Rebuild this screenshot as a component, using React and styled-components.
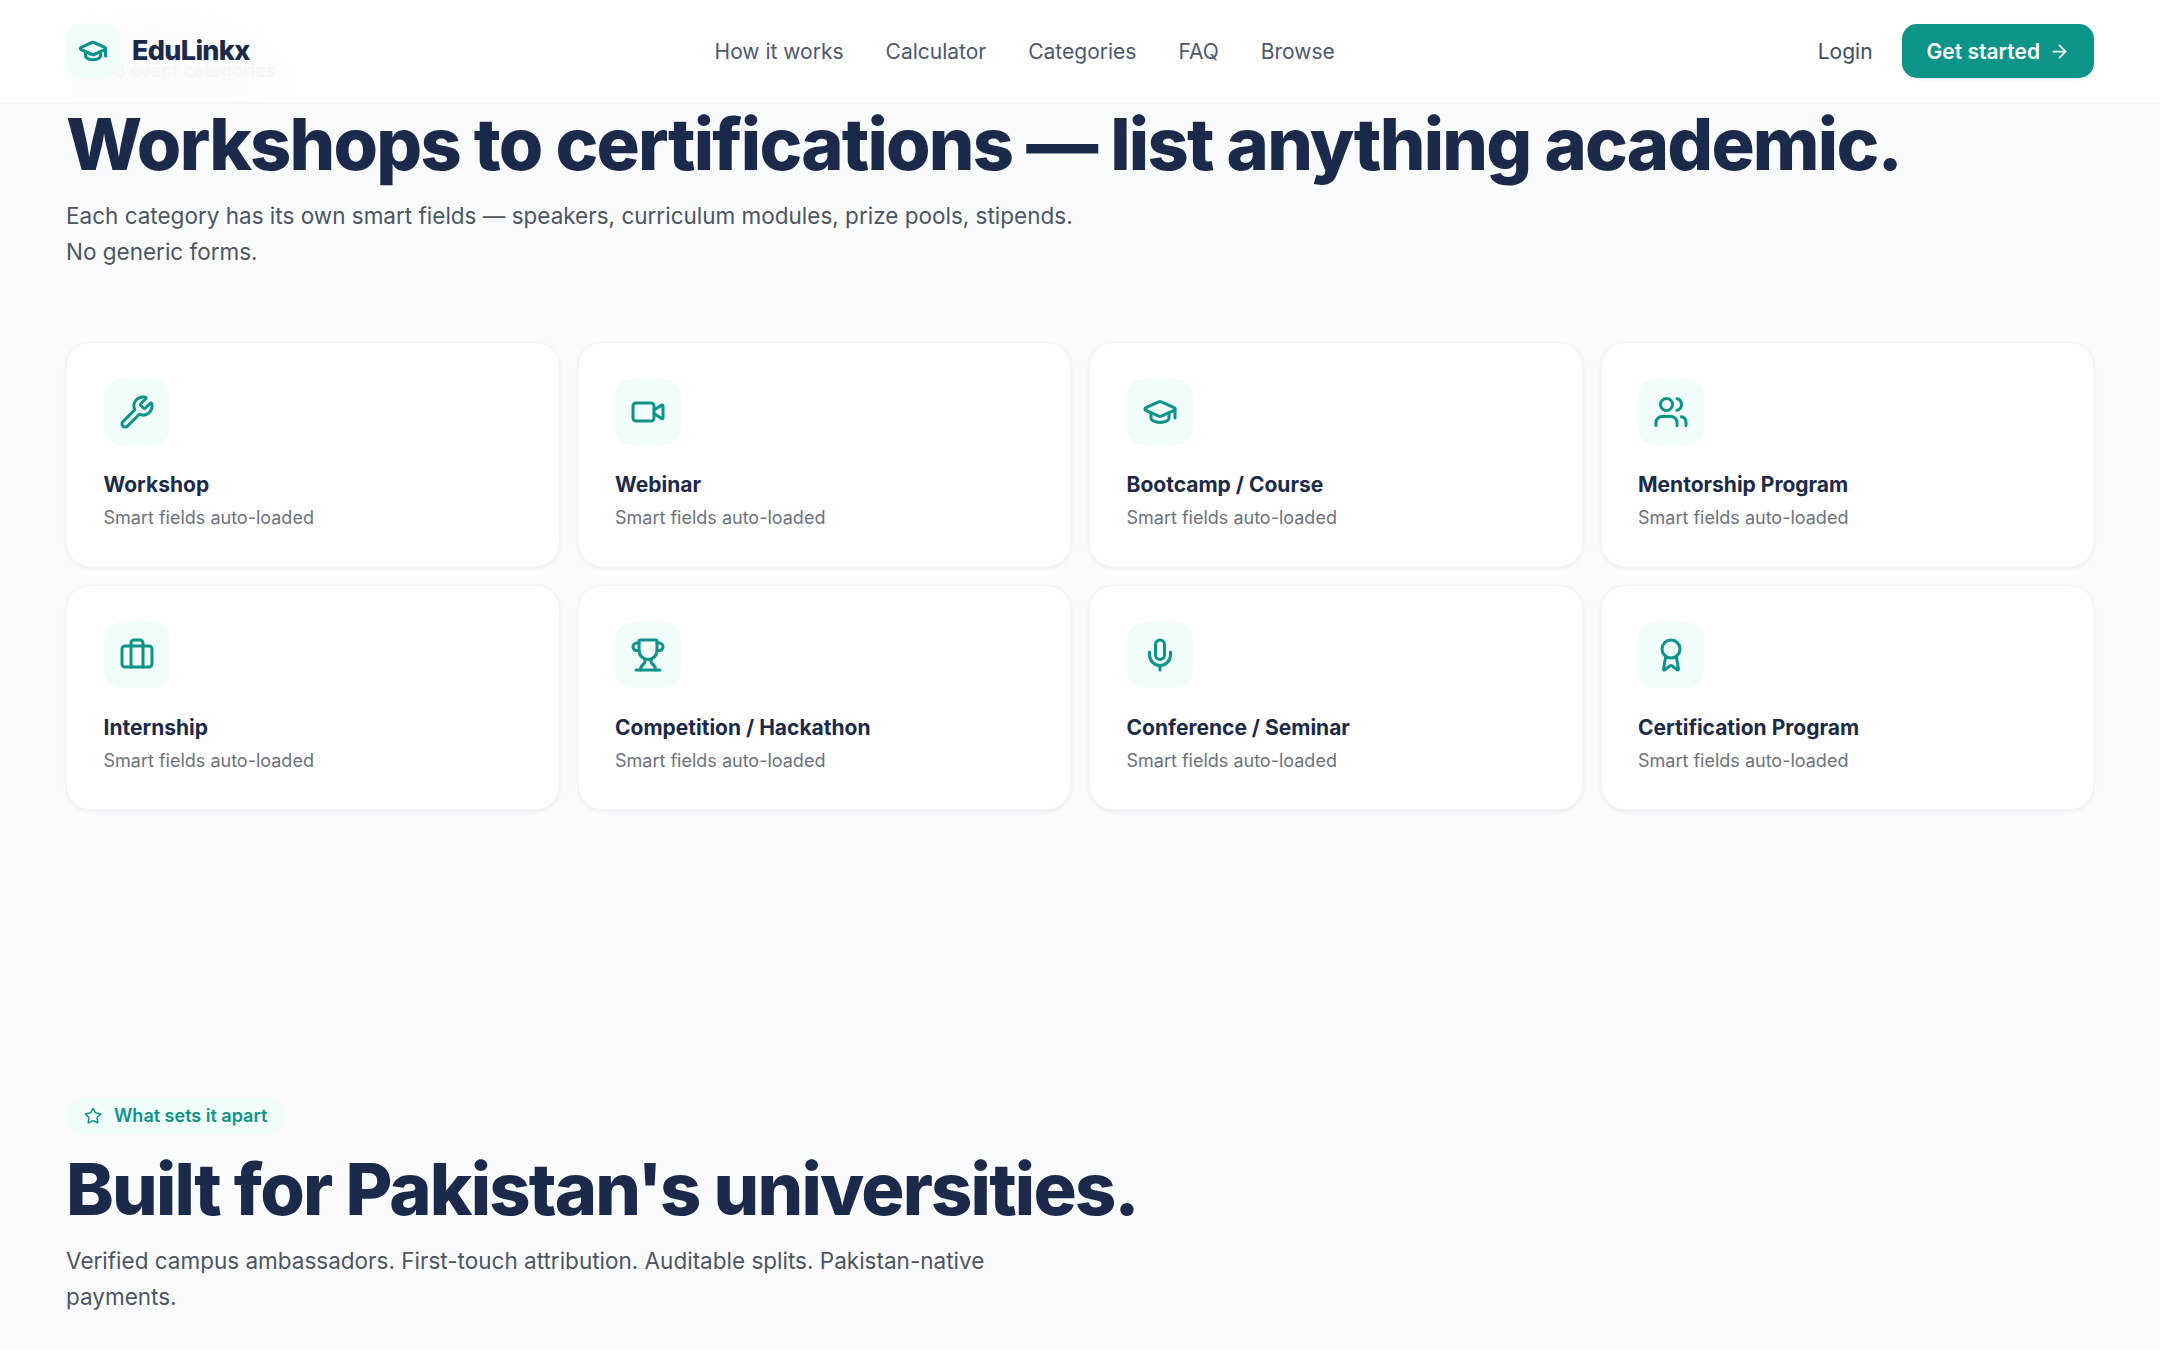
import React from 'react'
import styled, { createGlobalStyle } from 'styled-components'
import {
  ArrowRight,
  Award,
  Briefcase,
  GraduationCap,
  LayoutGrid,
  Mic,
  Star,
  Trophy,
  Users,
  Video,
  Wrench,
} from 'lucide-react'

const links = ['How it works', 'Calculator', 'Categories', 'FAQ', 'Browse']

const categories = [
  { name: 'Workshop', icon: Wrench },
  { name: 'Webinar', icon: Video },
  { name: 'Bootcamp / Course', icon: GraduationCap },
  { name: 'Mentorship Program', icon: Users },
  { name: 'Internship', icon: Briefcase },
  { name: 'Competition / Hackathon', icon: Trophy },
  { name: 'Conference / Seminar', icon: Mic },
  { name: 'Certification Program', icon: Award },
]

const App = () => {
  return (
    <>
      <GlobalStyle />
      <Header>
        <Brand>
          <LogoBox>
            <GraduationCap size={30} strokeWidth={2.5} />
          </LogoBox>
          <BrandName>EduLinkx</BrandName>
        </Brand>
        <Nav>
          {links.map((link) => (
            <NavLink key={link}>{link}</NavLink>
          ))}
        </Nav>
        <Actions>
          <Login>Login</Login>
          <Button>
            Get started
            <ArrowRight size={21} />
          </Button>
        </Actions>
      </Header>
      <main>
        <Categories>
          <Pill $muted>
            <LayoutGrid size={18} />8 event categories
          </Pill>
          <Title>Workshops to certifications — list anything academic.</Title>
          <Text>
            Each category has its own smart fields — speakers, curriculum
            modules, prize pools, stipends. No generic forms.
          </Text>
          <Grid>
            {categories.map(({ name, icon: Icon }) => (
              <Card key={name}>
                <IconBox>
                  <Icon size={36} />
                </IconBox>
                <h3>{name}</h3>
                <p>Smart fields auto-loaded</p>
              </Card>
            ))}
          </Grid>
        </Categories>
        <Features>
          <Pill>
            <Star size={18} />
            What sets it apart
          </Pill>
          <Title>Built for Pakistan's universities.</Title>
          <Text>
            Verified campus ambassadors. First-touch attribution. Auditable
            splits. Pakistan-native payments.
          </Text>
        </Features>
      </main>
    </>
  )
}

const GlobalStyle = createGlobalStyle`
  * {
    box-sizing: border-box;
    margin: 0;
    padding: 0;
  }
  body {
    background: #fafbfd;
    color: #1b2a4a;
    font-family: Inter, 'Liberation Sans', sans-serif;
    overflow: hidden;
  }
  svg {
    display: block;
    flex-shrink: 0;
  }
`
const Header = styled.header`
  position: sticky;
  top: 0;
  z-index: 10;
  display: flex;
  align-items: center;
  justify-content: space-between;
  height: 104px;
  padding: 0 66px;
  /* soft tint behind the brand, then the translucent bar */
  background: radial-gradient(
        ellipse 160px 84px at 82px 84px,
        rgba(246, 248, 252, 0.5) 50%,
        rgba(246, 248, 252, 0)
      )
      72px 0 / 250px 100% no-repeat,
    rgba(255, 255, 255, 0.92);
  background-clip: padding-box;
  border-bottom: 2px solid #f3f4f6;
`
const Brand = styled.div`
  display: flex;
  align-items: center;
  gap: 12px;
`
const LogoBox = styled.div`
  display: grid;
  place-items: center;
  width: 54px;
  height: 54px;
  border-radius: 15px;
  background: #f0fdfa;
  color: #0d9488;
`
const BrandName = styled.span`
  padding-bottom: 2px;
  font-size: 27px;
  font-weight: 800;
  letter-spacing: -0.025em;
`
const Nav = styled.nav`
  display: flex;
  gap: 42px;
`
const NavLink = styled.a`
  font-size: 21px;
  color: #4b5872;
`
const Actions = styled.div`
  display: flex;
  align-items: center;
  gap: 11px;
`
const Login = styled.a`
  padding: 0 18px;
  font-size: 21px;
  color: #3d4a66;
`
const Button = styled.button`
  display: flex;
  align-items: center;
  gap: 9px;
  height: 54px;
  padding: 0 24px 0 25px;
  border: none;
  border-radius: 15px;
  background: #0d9488;
  box-shadow: 0 1.5px 3px rgba(16, 24, 40, 0.06);
  color: #fff;
  font-family: inherit;
  font-size: 21px;
  font-weight: 600;
`
const Categories = styled.section`
  margin-top: -51.5px;
  padding: 0 66px;
`
const Features = styled.section`
  padding: 288px 66px 0;
`
const Pill = styled.div`
  display: flex;
  align-items: center;
  gap: 12px;
  width: fit-content;
  height: 36px;
  padding: 0 18px;
  border-radius: 18px;
  background: #f0fdfa;
  color: ${({ $muted }) => ($muted ? '#6b7f86' : '#0d9488')};
  font-size: 18px;
  font-weight: 600;
`
const Title = styled.h2`
  margin-top: 15px;
  font-size: 72px;
  font-weight: 800;
  line-height: 1.1;
  letter-spacing: -0.025em;
  white-space: nowrap;
`
const Text = styled.p`
  max-width: 1020px;
  margin-top: 15px;
  font-size: 22.5px;
  line-height: 36px;
  color: #4b5563;
`
const Grid = styled.div`
  display: grid;
  grid-template-columns: repeat(4, 1fr);
  gap: 18px;
  margin-top: 72px;
`
const Card = styled.article`
  height: 225px;
  padding: 36.5px;
  background: #fff;
  border: 1.5px solid #f3f4f6;
  border-radius: 24px;
  box-shadow: 0 1.5px 4.5px rgba(16, 24, 40, 0.05);
  h3 {
    margin-top: 25px;
    font-size: 21px;
    font-weight: 700;
    line-height: 30px;
  }
  p {
    margin-top: 4px;
    font-size: 18px;
    line-height: 27px;
    color: #6b7280;
  }
`
const IconBox = styled.div`
  display: grid;
  place-items: center;
  width: 66px;
  height: 66px;
  border-radius: 18px;
  background: #f0fdfa;
  color: #0d9488;
`
export default App
